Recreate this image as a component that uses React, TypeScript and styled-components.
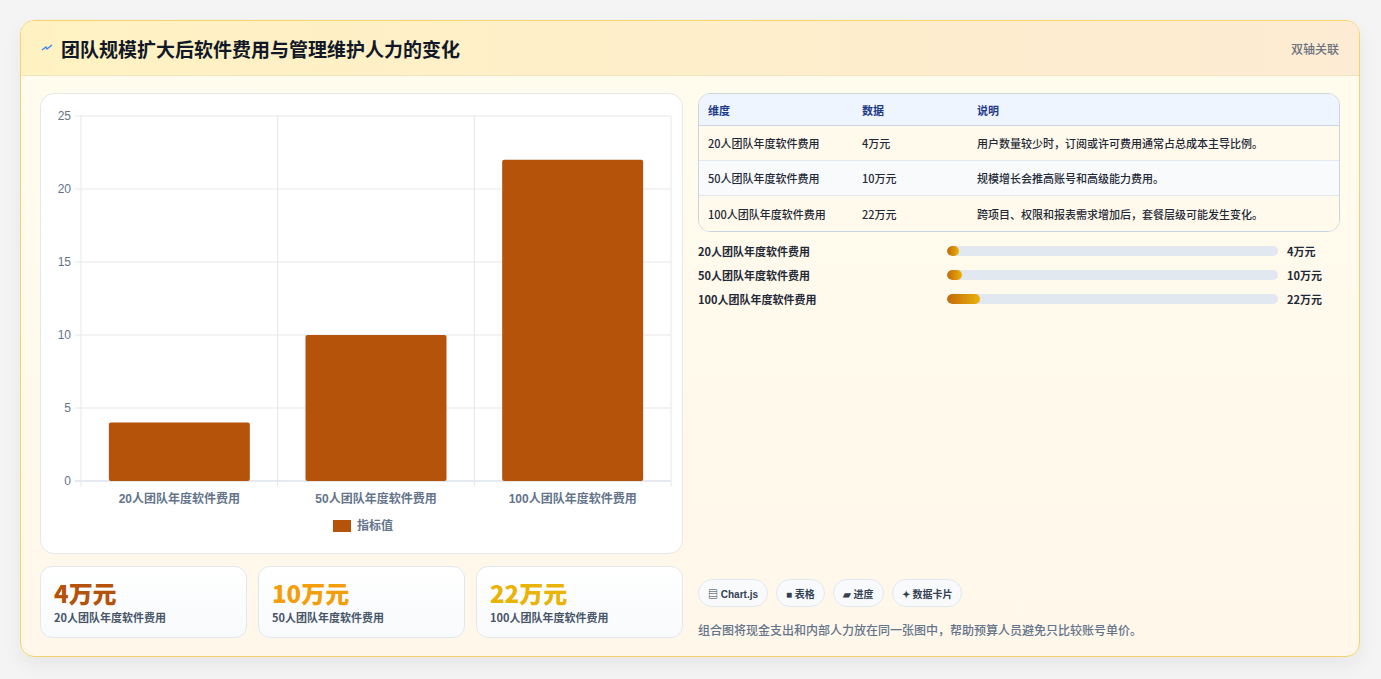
import React from "react";
import styled, { createGlobalStyle } from "styled-components";

const G = createGlobalStyle`
  html,body{margin:0;padding:0;background:#f4f4f5;}
  body{font-family:"Noto Sans CJK SC","Noto Sans",sans-serif;}
  *{box-sizing:border-box;}
`;
const Page = styled.div`padding:20px 21px 22px 20px;height:679px;`;
const Card = styled.div`
  height:637px;border:1px solid #f6d46a;border-radius:14px;overflow:hidden;
  background:linear-gradient(180deg,#fffcee,#fff7ea);display:flex;flex-direction:column;
  box-shadow:0 8px 20px rgba(0,0,0,0.06);
`;
const Header = styled.div`
  height:55px;flex:none;display:flex;align-items:center;justify-content:space-between;
  padding:0 20px 0 20px;background:linear-gradient(90deg,#fff2c2,#fdebd3);border-bottom:1px solid #f3e4c0;
`;
const Title = styled.h1`margin:0;font-size:19px;font-weight:700;color:#111827;display:flex;align-items:center;gap:8px;`;
const Tag = styled.span`font-size:12px;color:#6b7280;font-weight:500;`;
const Body = styled.div`flex:1;display:flex;gap:15px;padding:17px 19px 19px 19px;`;
const Left = styled.div`width:643px;display:flex;flex-direction:column;gap:12px;`;
const Right = styled.div`flex:1;display:flex;flex-direction:column;`;
const ChartBox = styled.div`height:461px;background:#fff;border:1px solid #e5e7eb;border-radius:14px;position:relative;`;
const Stats = styled.div`display:flex;gap:11px;`;
const Stat = styled.div`flex:1;height:72px;border:1px solid #e2e8f0;border-radius:12px;background:linear-gradient(180deg,#fff,#f8fafc);padding:10px 13px;`;
const StatVal = styled.div<{c:string}>`font-size:24px;font-weight:800;color:${p=>p.c};line-height:32px;`;
const StatLbl = styled.div`font-size:11px;font-weight:700;color:#475569;line-height:16px;`;
const Table = styled.table`width:100%;border-collapse:separate;border-spacing:0;border:1px solid #cbd5e1;border-radius:12px;overflow:hidden;font-size:11px;font-weight:500;color:#1f2937;`;
const Th = styled.th`text-align:left;font-weight:700;color:#1e3a8a;background:#eef5ff;height:32px;padding:0 9px;border-bottom:1px solid #cbd5e1;`;
const Td = styled.td<{alt?:boolean;last?:boolean}>`height:35px;padding:0 9px;background:${p=>p.alt?"#f8fafc":"#fffaeb"};border-bottom:${p=>p.last?"none":"1px solid #e2e8f0"};`;
const Bars = styled.div`margin-top:11px;display:flex;flex-direction:column;gap:8px;`;
const BarRow = styled.div`display:grid;grid-template-columns:240px 331px 1fr;align-items:center;column-gap:9px;height:16px;font-size:11px;font-weight:700;color:#1f2937;`;
const Track = styled.div`height:10px;border-radius:5px;background:#e2e8f0;overflow:hidden;`;
const Fill = styled.div`height:100%;border-radius:5px;background:linear-gradient(90deg,#c2680a,#eab308);`;
const Spacer = styled.div`flex:1;`;
const Chips = styled.div`display:flex;gap:8px;margin-bottom:14px;`;
const Chip = styled.span`height:28px;padding:0 9px;border:1px solid #e2e8f0;border-radius:14px;background:#f8fafc;font-size:10px;font-weight:700;color:#334155;display:flex;align-items:center;gap:3px;font-family:"Liberation Sans","Noto Sans CJK SC",sans-serif;`;
const Note = styled.div`font-size:12px;color:#64748b;font-weight:500;`;

const data=[["20人团队年度软件费用",4,"用户数量较少时，订阅或许可费用通常占总成本主导比例。"],["50人团队年度软件费用",10,"规模增长会推高账号和高级能力费用。"],["100人团队年度软件费用",22,"跨项目、权限和报表需求增加后，套餐层级可能发生变化。"]] as const;

function Chart(){
  const x0=40,x1=630,y0=22,y1=387;const h=y1-y0;const sw=(x1-x0)/3;
  return <svg width="643" height="461" style={{position:"absolute",left:0,top:0}} fontFamily="Liberation Sans, Noto Sans CJK SC, sans-serif">
    {[0,5,10,15,20,25].map(v=>{const y=y1-h*v/25;return <g key={v}><line x1={x0-6} x2={x1} y1={y} y2={y} stroke={v===0?"#cbd5e1":"#e5e7eb"}/><text x={30} y={y+4} fontSize="12" fill="#64748b" textAnchor="end">{v}</text></g>})}
    {[0,1,2,3].map(i=><line key={i} x1={x0+sw*i} x2={x0+sw*i} y1={y0} y2={y1+6} stroke="#e5e7eb"/>)}
    {data.map((d,i)=>{const bh=h*d[1]/25;const cx=x0+sw*(i+.5);return <g key={i}><rect x={cx-70.5} y={y1-bh} width={141} height={bh} fill="#b45309" rx="2"/><text x={cx} y={409} fontSize="12" fontWeight="600" fill="#64748b" textAnchor="middle">{d[0]}</text></g>})}
    <rect x="292" y="426" width="18" height="12" fill="#b45309"/>
    <text x="316" y="436" fontSize="12" fill="#64748b" fontWeight="600">指标值</text>
  </svg>;
}

export default function App(){
  const cols=["#b45309","#f59e0b","#eab308"];
  return <><G/><Page><Card>
    <Header><Title><svg width="12" height="12" viewBox="0 0 12 12"><path d="M1 8 L5 5 L6 7 L11 3" stroke="#3b82f6" strokeWidth="1.4" fill="none"/></svg>团队规模扩大后软件费用与管理维护人力的变化</Title><Tag>双轴关联</Tag></Header>
    <Body>
      <Left>
        <ChartBox><Chart/></ChartBox>
        <Stats>{data.map((d,i)=><Stat key={i}><StatVal c={cols[i]}>{d[1]}万元</StatVal><StatLbl>{d[0]}</StatLbl></Stat>)}</Stats>
      </Left>
      <Right>
        <Table><thead><tr><Th style={{width:154}}>维度</Th><Th style={{width:115}}>数据</Th><Th>说明</Th></tr></thead>
          <tbody>{data.map((d,i)=><tr key={i}><Td alt={i===1} last={i===2}>{d[0]}</Td><Td alt={i===1} last={i===2}>{d[1]}万元</Td><Td alt={i===1} last={i===2}>{d[2]}</Td></tr>)}</tbody></Table>
        <Bars>{data.map((d,i)=><BarRow key={i}><span>{d[0]}</span><Track><Fill style={{width:`${d[1]/22*10}%`,minWidth:12}}/></Track><span>{d[1]}万元</span></BarRow>)}</Bars>
        <Spacer/>
        <Chips><Chip>▤ Chart.js</Chip><Chip>■ 表格</Chip><Chip>▰ 进度</Chip><Chip>✦ 数据卡片</Chip></Chips>
        <Note>组合图将现金支出和内部人力放在同一张图中，帮助预算人员避免只比较账号单价。</Note>
      </Right>
    </Body>
  </Card></Page></>;
}
